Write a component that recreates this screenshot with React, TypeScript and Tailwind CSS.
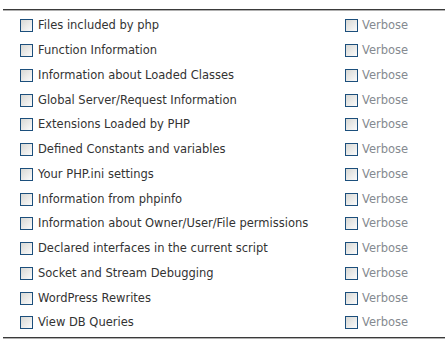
import React from "react";

const items = [
  "Files included by php",
  "Function Information",
  "Information about Loaded Classes",
  "Global Server/Request Information",
  "Extensions Loaded by PHP",
  "Defined Constants and variables",
  "Your PHP.ini settings",
  "Information from phpinfo",
  "Information about Owner/User/File permissions",
  "Declared interfaces in the current script",
  "Socket and Stream Debugging",
  "WordPress Rewrites",
  "View DB Queries",
];

function Box() {
  return (
    <span className="inline-block w-[13px] h-[13px] shrink-0 border border-[#1c4f7c] bg-gradient-to-br from-[#d8d8d4] to-[#fbfbfb]" />
  );
}

export default function App() {
  return (
    <div className="w-[445px] h-[341px] bg-white" style={{ fontFamily: '"DejaVu Sans", Verdana, sans-serif' }}>
      <div className="pt-[9px] pl-[3px]">
        <div className="h-px bg-[#3a3a3a]" />
        <div className="h-px bg-[#b0b0b0]" />
        <div className="pt-[2.5px] pb-[1.75px]">
          {items.map((t) => (
            <div key={t} className="h-[24.75px] flex items-center text-[11.5px]">
              <div className="pl-[17px] w-[342px] flex items-center gap-[5px] text-[#333]">
                <Box />
                <span>{t}</span>
              </div>
              <div className="flex items-center gap-[4px] text-[#858a90]">
                <Box />
                <span>Verbose</span>
              </div>
            </div>
          ))}
        </div>
        <div className="h-px bg-[#3a3a3a]" />
        <div className="h-px bg-[#b0b0b0]" />
      </div>
    </div>
  );
}
